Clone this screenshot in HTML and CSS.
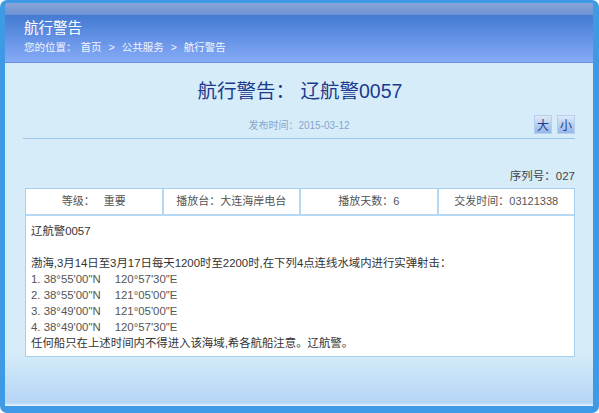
FILE: index.html
```html
<!DOCTYPE html>
<html lang="zh-CN">
<head>
<meta charset="utf-8">
<title>航行警告</title>
<link rel="stylesheet" href="styles.css">
</head>
<body>
<div class="frame">
  <div class="header">
    <div class="header-strip"></div>
    <div class="header-title">航行警告</div>
    <div class="crumbs">
      <span class="crumb-label">您的位置：</span>
      <span>首页</span><span class="sep">&gt;</span><span>公共服务</span><span class="sep">&gt;</span><span>航行警告</span>
    </div>
  </div>
  <div class="main">
    <h1 class="doc-title">航行警告： 辽航警0057</h1>
    <div class="meta">
      <div></div>
      <div class="date">发布时间：2015-03-12</div>
      <div class="sizes"><span class="size-btn">大</span><span class="size-btn">小</span></div>
    </div>
    <div class="serial">序列号：027</div>
    <div class="info">
      <div class="info-head">
        <div class="cell">等级：&nbsp;&nbsp;&nbsp;重要</div>
        <div class="cell">播放台：大连海岸电台</div>
        <div class="cell">播放天数：6</div>
        <div class="cell">交发时间：03121338</div>
      </div>
      <div class="info-body">
        <p>辽航警0057</p>
        <p>&nbsp;</p>
        <p>渤海,3月14日至3月17日每天1200时至2200时,在下列4点连线水域内进行实弹射击：</p>
        <p class="coord">1. 38°55'00"N<span class="gap"></span>120°57'30"E</p>
        <p class="coord">2. 38°55'00"N<span class="gap"></span>121°05'00"E</p>
        <p class="coord">3. 38°49'00"N<span class="gap"></span>121°05'00"E</p>
        <p class="coord">4. 38°49'00"N<span class="gap"></span>120°57'30"E</p>
        <p>任何船只在上述时间内不得进入该海域,希各航船注意。辽航警。</p>
      </div>
    </div>
  </div>
</div>
</body>
</html>
```
FILE: styles.css
```css
* { box-sizing: border-box; }
html, body { margin: 0; padding: 0; background: #ffffff; }
body {
  width: 599px;
  height: 413px;
  font-family: "Liberation Sans", "Noto Sans CJK SC", sans-serif;
  font-size: 11px;
  color: #333;
}
.frame {
  width: 599px;
  height: 413px;
  border-style: solid;
  border-color: #3f9ae6;
  border-width: 3px 6px 7px 5px;
  border-radius: 7px;
  overflow: hidden;
  display: flex;
  flex-direction: column;
}
.header {
  height: 60px;
  flex: none;
  background: linear-gradient(to bottom, #3a71c8 0%, #4a80d6 30%, #6d98ea 70%, #86abf6 100%);
  border-bottom: 1px solid #6b8fe0;
  color: #fff;
  padding-left: 19px;
}
.header-strip {
  height: 12px;
  margin-left: -19px;
  background: linear-gradient(to bottom, #87a5d8, #6d92d4);
}
.header-title {
  font-size: 14.5px;
  line-height: 20px;
  margin-top: 3px;
}
.crumbs {
  font-size: 10.5px;
  line-height: 14px;
  margin-top: 2px;
  display: flex;
  color: #f2f6ff;
}
.crumb-label { margin-right: 4px; }
.sep { margin: 0 7px; }
.main {
  flex: 1;
  background: linear-gradient(to bottom, #d6edf9 0%, #d6edf9 84%, #b5d5f6 99%, #e6f3fc 100%);
  padding: 13px 18px 0 20px;
  display: flex;
  flex-direction: column;
}
.doc-title {
  margin: 0;
  font-size: 19.5px;
  font-weight: normal;
  line-height: 30px;
  text-align: center;
  color: #1c3b8e;
}
.meta {
  display: grid;
  grid-template-columns: 1fr auto 1fr;
  align-items: center;
  margin: 9px 0 0 -2px;
  height: 24px;
  padding-bottom: 4px;
  border-bottom: 1px solid #9ec6ea;
}
.date {
  font-size: 10px;
  color: #87a4cc;
}
.sizes {
  display: flex;
  justify-content: flex-end;
  gap: 5px;
}
.size-btn {
  width: 18px;
  height: 19px;
  display: flex;
  align-items: center;
  justify-content: center;
  font-size: 12px;
  color: #1d3a86;
  background: linear-gradient(to bottom, #dde9f8, #94b6e8);
  border: 1px solid #b7cfee;
}
.serial {
  text-align: right;
  font-size: 11.5px;
  line-height: 16px;
  margin-top: 29px;
  color: #444;
}
.info {
  margin-top: 4px;
  border: 1px solid #a8cff0;
  background: #fff;
}
.info-head {
  display: grid;
  grid-template-columns: repeat(4, 1fr);
  gap: 2px;
  background: #b6d8f3;
  border-bottom: 2px solid #b6d8f3;
}
.cell {
  background: #fff;
  height: 25px;
  line-height: 25px;
  text-align: center;
  color: #555;
}
.info-body {
  padding: 7px 5px 5px 5px;
}
.info-body p {
  margin: 0;
  font-size: 11.4px;
  line-height: 16px;
  color: #333;
}
.info-body p.coord { color: #555; }
.gap { display: inline-block; width: 14px; }
```
